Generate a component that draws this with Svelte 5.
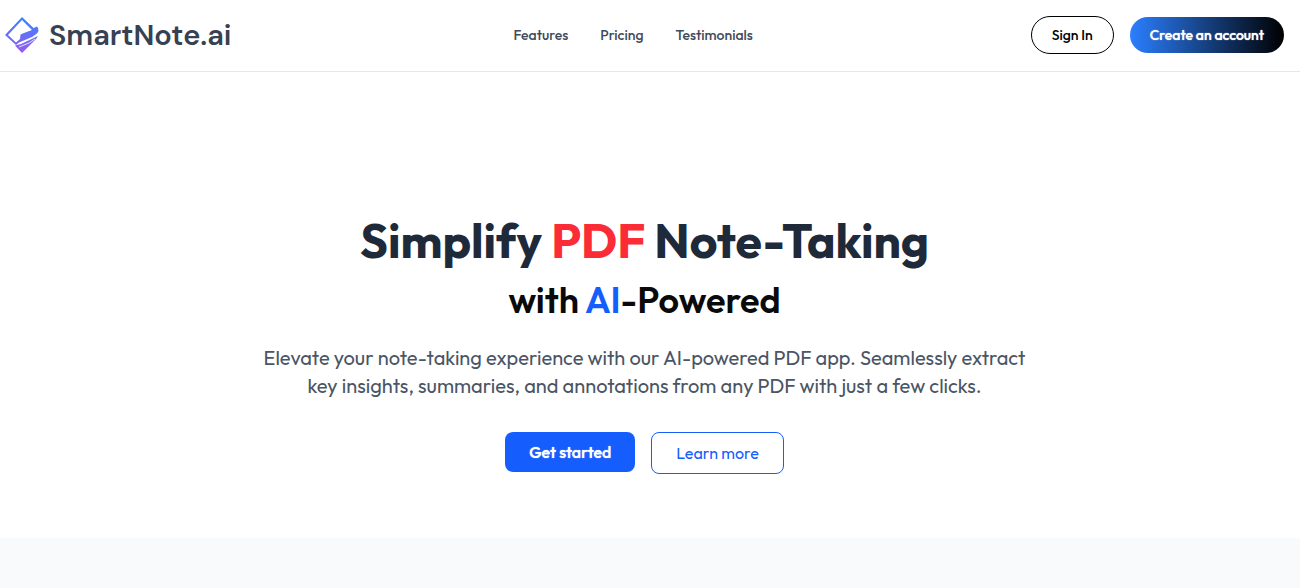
<script>
  const links = ['Features', 'Pricing', 'Testimonials'];
</script>

<header>
  <a class="logo" href="#home">
    <svg width="35" height="36" viewBox="0 0 35 36" aria-hidden="true">
      <defs>
        <linearGradient id="brand" gradientUnits="userSpaceOnUse" x1="0" y1="0" x2="0" y2="36">
          <stop offset="0" stop-color="#2f86ff" />
          <stop offset="1" stop-color="#9a58f0" />
        </linearGradient>
      </defs>
      <path fill="url(#brand)" fill-rule="evenodd" d="M17 0 L28.500 11 L32 9.500 L33 11 L33.500 14 L32 16.500 L27 20 L14 25.500 L11 28 L0 18 Z M17 3 L3 18 L11 25.500 L15 22 L15.500 17.500 L19 16 L27 13 Z" />
      <path fill="url(#brand)" d="M10 28.500 L16 27 L33 19 L31 22 L17 36 Z" />
      <path fill="none" stroke="#fff" stroke-width="0.800" d="M14 30 L24 26 L30 22" />
    </svg>
    <span>SmartNote.ai</span>
  </a>
  <nav>
    {#each links as link}
      <a href={'#' + link.toLowerCase()}>{link}</a>
    {/each}
  </nav>
  <div class="account">
    <button class="sign-in">Sign In</button>
    <button class="create">Create an account</button>
  </div>
</header>

<main>
  <section class="hero">
    <h1>Simplify <span class="red">PDF</span> Note-Taking</h1>
    <h2>with <span class="blue">AI</span>-Powered</h2>
    <p>Elevate your note-taking experience with our AI-powered PDF app. Seamlessly extract key insights, summaries, and annotations from any PDF with just a few clicks.</p>
    <div class="actions">
      <button class="start">Get started</button>
      <button class="more">Learn more</button>
    </div>
  </section>
  <section class="next"></section>
</main>

<style>
  :global(body) {
    margin: 0;
    background: #fff;
    font-family: Outfit, Lato, sans-serif;
    color: #0a0a0a;
  }
  :global(#app) {
    display: flex;
    flex-direction: column;
    min-height: 100vh;
  }
  header {
    display: flex;
    align-items: center;
    justify-content: space-between;
    box-sizing: border-box;
    min-height: 72px;
    padding: 0 16px 2px 5px;
    border-bottom: 1px solid #e5e7eb;
  }
  a {
    color: inherit;
    text-decoration: none;
  }
  .logo {
    display: flex;
    align-items: center;
    gap: 9px;
    padding-right: 4px;
    color: #374151;
    font: 600 29px/36px "DM Sans", Inter, sans-serif;
  }
  nav {
    display: flex;
    gap: 32px;
    color: #3f4a5c;
    font-size: 14px;
    font-weight: 500;
    line-height: 20px;
  }
  .account {
    display: flex;
    align-items: center;
    gap: 16px;
  }
  button {
    font-family: inherit;
    cursor: pointer;
    white-space: nowrap;
  }
  .account button {
    border-radius: 20px;
    padding: 8px 20px;
    font-size: 14px;
    line-height: 20px;
  }
  .sign-in {
    border: 1px solid #000;
    background: #fff;
    color: #000;
    font-weight: 500;
  }
  .create {
    border: 0;
    background: linear-gradient(to right, #2b7fff, #000);
    color: #fff;
    font-weight: 500;
    text-shadow: 0 0 1px #fff;
  }
  main {
    display: flex;
    flex: 1;
    flex-direction: column;
  }
  .hero {
    display: flex;
    flex-direction: column;
    align-items: center;
    padding: 144px 27px 64px 16px;
    text-align: center;
  }
  h1, h2, p {
    margin: 0;
  }
  h1 {
    color: #1e2939;
    font-size: 48px;
    font-weight: 700;
    line-height: 48px;
  }
  h2 {
    margin-top: 16px;
    font-size: 36px;
    font-weight: 600;
    line-height: 40px;
  }
  .red {
    color: #fb2c36;
  }
  .blue {
    color: #155dfc;
  }
  p {
    max-width: 768px;
    margin-top: 24px;
    color: #4a5565;
    font-size: 20px;
    line-height: 28px;
  }
  .actions {
    display: flex;
    align-items: flex-start;
    gap: 16px;
    margin-top: 32px;
  }
  .actions button {
    padding: 8px 24px;
    border-radius: 8px;
    font-size: 16px;
    line-height: 24px;
  }
  .start {
    border: 0;
    background: #155dfc;
    color: #fff;
    font-weight: 500;
    text-shadow: 0 0 1px #fff;
  }
  .more {
    border: 1px solid #155dfc;
    background: #fff;
    color: #155dfc;
    font-weight: 400;
  }
  .next {
    flex: 1;
    background: #f9fafb;
  }
</style>
